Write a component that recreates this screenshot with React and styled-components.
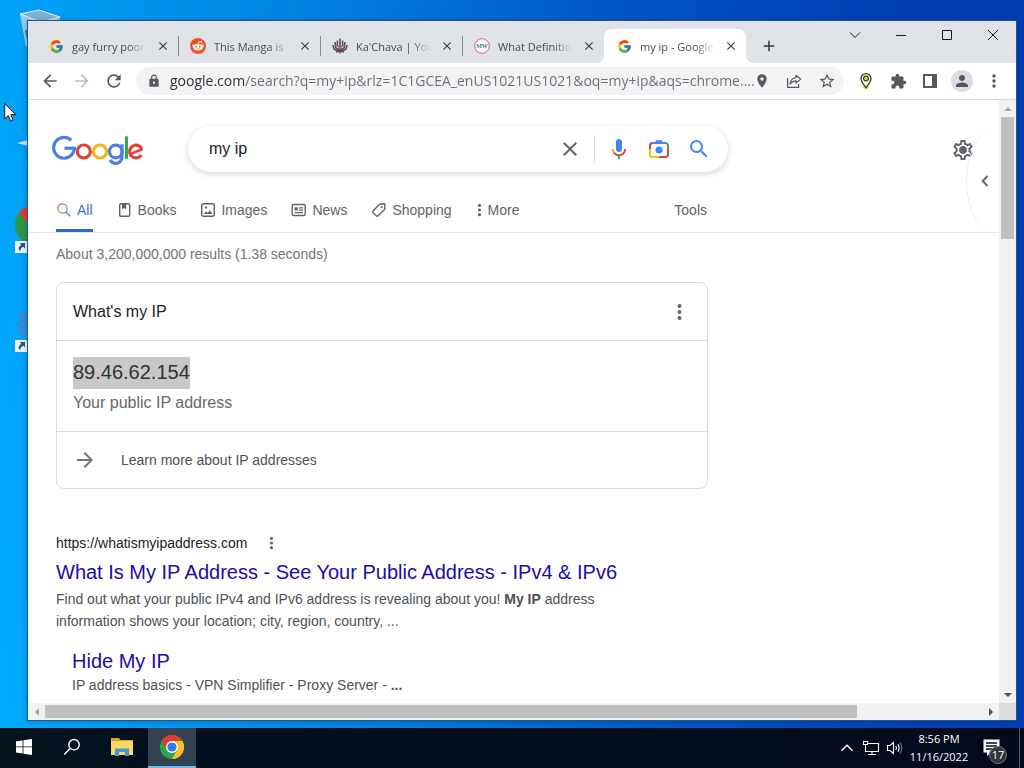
import React from "react";
import styled, { createGlobalStyle, css } from "styled-components";
import {
  MdArrowBack, MdArrowForward, MdRefresh, MdLock, MdLocationOn, MdStarBorder,
  MdExtension, MdPerson, MdMoreVert, MdClose, MdAdd, MdSearch, MdOutlineSettings,
} from "react-icons/md";
import { FcGoogle } from "react-icons/fc";

const ui = `"Open Sans", "Noto Sans", sans-serif`;
const web = `"Liberation Sans", Arial, sans-serif`;

const Global = createGlobalStyle`
  *, *::before, *::after { box-sizing: border-box; }
  body { margin: 0; font-family: ${web}; color: #202124; }
  svg { display: block; flex: none; }
  button { border: 0; padding: 0; background: none; color: inherit; font: inherit; }
  a { color: inherit; text-decoration: none; }
  p, h1, h2, h3, h4 { margin: 0; font-weight: 400; }
`;

/* ---------- desktop ---------- */
const Screen = styled.div`
  position: relative;
  height: 100vh;
  display: flex;
  flex-direction: column;
  overflow: hidden;
  background: linear-gradient(82deg, #00adff 0%, #00a0f6 12%, #0082e2 36%, #0258ca 62%, #0040b6 85%, #003eb4 100%);
`;
const Workspace = styled.main`
  flex: 1;
  min-height: 0;
  display: flex;
  padding: 20px 7px 7px 27px;
`;
const DesktopItem = styled.div`
  position: absolute;
  left: ${(p) => p.$x}px;
  top: ${(p) => p.$y}px;
`;
const Pointer = styled(DesktopItem)`
  z-index: 5;
`;

/* ---------- browser window ---------- */
const BrowserWindow = styled.section`
  position: relative;
  flex: 1;
  min-width: 0;
  display: flex;
  flex-direction: column;
  background: #fff;
  border: 1px solid #24567f;
  box-shadow: 0 1px 6px rgba(0, 20, 80, 0.3);
`;
const TitleBar = styled.header`
  display: flex;
  height: 42px;
  padding-left: 8px;
  background: #dfe2e6;
  font-family: ${ui};
`;
const Tabs = styled.div`
  display: flex;
  align-items: flex-end;
`;
const Tab = styled.div`
  position: relative;
  display: flex;
  align-items: center;
  width: 142px;
  height: 34px;
  padding: 0 7px 0 12px;
  gap: 8px;
  font-size: 11px;
  color: #484c50;
  ${(p) =>
    p.$active
      ? css`
          background: #fff;
          border-radius: 8px 8px 0 0;
          &::before, &::after {
            content: "";
            position: absolute;
            bottom: 0;
            width: 8px;
            height: 8px;
          }
          &::before { left: -8px; background: radial-gradient(circle at 0 0, transparent 8px, #fff 8px); }
          &::after { right: -8px; background: radial-gradient(circle at 100% 0, transparent 8px, #fff 8px); }
        `
      : p.$divider &&
        css`
          &::after {
            content: "";
            position: absolute;
            right: -1px;
            width: 1px;
            height: 20px;
            background: #85898d;
          }
        `}
`;
const TabIcon = styled.span`
  display: grid;
  place-items: center;
  flex: none;
  width: 16px;
  height: 16px;
`;
const TabTitle = styled.span`
  flex: 1;
  min-width: 0;
  white-space: nowrap;
  mask-image: linear-gradient(90deg, #000 74%, transparent 100%);
`;
const TabClose = styled.button`
  display: grid;
  place-items: center;
  width: 16px;
  height: 16px;
  color: #3c4043;
`;
const NewTab = styled.button`
  display: grid;
  place-items: center;
  width: 28px;
  height: 34px;
  margin: 0 auto 0 9px;
  align-self: flex-end;
  color: #303438;
`;
const WindowButton = styled.button`
  display: grid;
  place-items: center;
  width: 46px;
  height: 28px;
`;
const Toolbar = styled.div`
  display: flex;
  align-items: center;
  gap: 4px;
  height: 37px;
  padding: 0 8px;
  border-bottom: 1px solid #d9dbde;
  font-family: ${ui};
`;
const ToolButton = styled.button`
  display: grid;
  place-items: center;
  flex: none;
  width: 28px;
  height: 28px;
  color: ${(p) => (p.$muted ? "#bcbfc2" : "#55585c")};
`;
const Omnibox = styled.div`
  flex: 1;
  min-width: 0;
  display: flex;
  align-items: center;
  height: 28px;
  margin: 0 4px;
  padding: 0 4px 0 11px;
  border-radius: 14px;
  background: #f1f3f4;
  color: #55585c;
`;
const UrlInput = styled.input`
  flex: 1;
  min-width: 0;
  height: 24px;
  margin-left: 9px;
  padding: 0;
  border: 0;
  outline: 0;
  font: 14px/24px ${ui};
  background: linear-gradient(90deg, #2b2e32 76px, #6a6e73 76px);
  background-clip: text;
  color: transparent;
`;
const OmniboxActions = styled.div`
  display: flex;
  align-items: center;
  gap: 16px;
  padding-right: 6px;
`;
const OmniboxButton = styled.button`
  display: grid;
  place-items: center;
  width: 16px;
  height: 28px;
`;
const Avatar = styled.span`
  display: grid;
  place-items: center;
  width: 22px;
  height: 22px;
  border-radius: 50%;
  background: #dadde6;
`;

/* ---------- scrolling page area ---------- */
const PageGrid = styled.div`
  flex: 1;
  min-height: 0;
  display: grid;
  grid-template: minmax(0, 1fr) 17px / minmax(0, 1fr) 17px;
`;
const Viewport = styled.div`
  position: relative;
  overflow: hidden;
`;
const ScrollBar = styled.div`
  display: flex;
  flex-direction: ${(p) => (p.$vertical ? "column" : "row")};
  background: #f1f1f1;
`;
const ScrollArrow = styled.button`
  display: grid;
  place-items: center;
  flex: none;
  width: 17px;
  height: 17px;
  color: ${(p) => (p.$dim ? "#a3a3a3" : "#505050")};
`;
const ScrollTrack = styled.div`
  flex: 1;
  padding: ${(p) => (p.$vertical ? "0 2px" : "2px 0")};
`;
const ScrollThumb = styled.div`
  width: ${(p) => (p.$vertical ? "100%" : "86.7%")};
  height: ${(p) => (p.$vertical ? "21.5%" : "100%")};
  background: #c0c0c0;
`;
const ScrollCorner = styled.div`
  background: #dcdcdc;
`;

/* ---------- search page ---------- */
const SearchHeader = styled.div`
  display: flex;
  align-items: center;
  padding: 26px 16px 16px 24px;
`;
const LogoLink = styled.a`
  margin-right: 44px;
`;
const SearchForm = styled.form`
  display: flex;
  align-items: center;
  flex: 0 1 540px;
  height: 46px;
  padding: 0 9px 0 21px;
  border-radius: 23px;
  background: #fff;
  box-shadow: 0 2px 5px 1px rgba(64, 60, 67, 0.16);
`;
const SearchInput = styled.input`
  flex: 1;
  min-width: 0;
  padding: 0;
  border: 0;
  outline: 0;
  background: none;
  font: 16px/24px ${web};
  color: #202124;
`;
const FormButton = styled.button`
  display: grid;
  place-items: center;
  flex: none;
  width: 40px;
  height: 40px;
  color: ${(p) => p.$color || "#63676b"};
`;
const FormDivider = styled.span`
  width: 1px;
  height: 28px;
  margin: 0 4px;
  background: #dadce0;
`;
const SettingsButton = styled(FormButton)`
  margin-left: auto;
`;
const NavBar = styled.nav`
  height: 45px;
  padding-left: 28px;
  border-bottom: 1px solid #e4e6e8;
`;
const NavList = styled.div`
  display: flex;
  gap: 24px;
  max-width: 651px;
`;
const NavItem = styled.a`
  display: flex;
  align-items: center;
  gap: 5px;
  height: 44px;
  padding-top: 3px;
  border-bottom: 3px solid ${(p) => (p.$active ? "#2b6cc0" : "transparent")};
  font-size: 14px;
  color: ${(p) => (p.$active ? "#3c70cc" : "#5f6368")};
`;
const ToolsButton = styled.button`
  margin-left: auto;
  font-size: 14px;
  color: #5f6368;
`;
const Results = styled.div`
  max-width: 680px;
  padding-left: 28px;
`;
const Stats = styled.p`
  padding: 11px 0 18px;
  font-size: 14px;
  line-height: 20px;
  color: #70757a;
`;
const Card = styled.section`
  border: 1px solid #dadce0;
  border-radius: 8px;
`;
const CardRow = styled.div`
  display: flex;
  align-items: center;
  gap: 24px;
  height: ${(p) => p.$height}px;
  padding: 0 16px;
`;
const CardTitle = styled.h2`
  margin-right: auto;
  font-size: 16px;
`;
const CardBody = styled.div`
  padding: 16px 16px 14px;
  border: solid #dadce0;
  border-width: 1px 0;
`;
const Selected = styled.mark`
  display: inline-block;
  vertical-align: top;
  padding-bottom: 2px;
  font-size: 20px;
  line-height: 30px;
  background: #c8c8c8;
  color: #303235;
`;
const Caption = styled.p`
  font-size: 16px;
  line-height: 28px;
  color: #65696e;
`;
const LearnMore = styled.a`
  font-size: 14px;
  color: #4d5156;
`;
const IconButton = styled.button`
  display: grid;
  place-items: center;
  width: 24px;
  height: 20px;
  color: #63676b;
`;
const Result = styled.article`
  margin-top: 44px;
`;
const ResultUrl = styled.div`
  display: flex;
  align-items: center;
  gap: 12px;
  margin-bottom: 6px;
  font-size: 14px;
  line-height: 20px;
`;
const ResultTitle = styled.h3`
  font-size: 20px;
  line-height: 26px;
  color: #1a0dab;
`;
const Snippet = styled.p`
  max-width: 600px;
  padding-top: ${(p) => (p.$flush ? 0 : 3)}px;
  font-size: 14px;
  line-height: 22px;
  color: #4d5156;
`;
const SubResult = styled.div`
  padding: 16px 0 0 16px;
`;
const SideFlap = styled.button`
  position: absolute;
  top: 27px;
  right: 0;
  display: grid;
  place-items: center;
  width: 33px;
  height: 108px;
  padding-left: 4px;
  border-left: 1px solid #eceded;
  border-radius: 100% 0 0 100% / 50% 0 0 50%;
  color: #63676b;
`;

/* ---------- taskbar ---------- */
const Taskbar = styled.footer`
  display: flex;
  height: 40px;
  background: linear-gradient(90deg, #02131e, #030d1c 60%, #030a1c);
  color: #fff;
  font-family: ${ui};
`;
const TaskGroup = styled.div`
  display: flex;
  gap: ${(p) => p.$gap || 0}px;
  margin-right: ${(p) => (p.$end ? "auto" : "2px")};
`;
const TaskButton = styled.button`
  display: grid;
  place-items: center;
  width: 48px;
  border-bottom: 2px solid ${(p) => (p.$active ? "#76b9ed" : "transparent")};
  background: ${(p) => (p.$active ? "#334450" : "none")};
`;
const TrayButton = styled.button`
  display: grid;
  place-items: center;
  width: 24px;
`;
const Clock = styled.button`
  width: 64px;
  font-size: 11px;
  line-height: 18px;
  text-align: center;
  white-space: nowrap;
`;
const Notifications = styled.button`
  position: relative;
  display: flex;
  align-items: center;
  width: 48px;
  padding-left: 12px;
`;
const Badge = styled.span`
  position: absolute;
  left: 18px;
  top: 18px;
  width: 18px;
  height: 18px;
  border: 1px solid #777;
  border-radius: 50%;
  background: #32363b;
  font-size: 11px;
  line-height: 16px;
  text-align: center;
`;
const ShowDesktop = styled.button`
  width: 5px;
  border-left: 1px solid #4b5564;
`;

/* ---------- drawings ---------- */
const Triangle = ({ turn }) => (
  <svg width="8" height="8" viewBox="0 0 8 8"><path d="M0 6L4 2l4 4z" fill="currentColor" transform={`rotate(${turn} 4 4)`} /></svg>
);

const GoogleLogo = () => (
  <svg width="92" height="32" viewBox="0 0 92 32" role="img" aria-label="Google" fill="none" strokeWidth="3.1">
    <circle cx="12" cy="14.8" r="10.4" stroke="#4a7fe6" pathLength="360" strokeDasharray="314 360" />
    <line x1="12.5" y1="15.2" x2="23.9" y2="15.2" stroke="#4a7fe6" />
    <circle cx="31.8" cy="18.5" r="6.5" stroke="#dc4335" />
    <circle cx="48" cy="18.5" r="6.5" stroke="#f6b512" />
    <circle cx="63.8" cy="18.5" r="6.4" stroke="#4a7fe6" />
    <line x1="70" y1="11.3" x2="70" y2="24.8" stroke="#4a7fe6" />
    <circle cx="63.8" cy="24.3" r="6.2" stroke="#4a7fe6" pathLength="360" strokeDasharray="155 360" />
    <line x1="74.5" y1="3.3" x2="74.5" y2="25.9" stroke="#34a853" />
    <circle cx="84" cy="18.5" r="6.4" stroke="#dc4335" pathLength="360" strokeDasharray="302 360" transform="rotate(34 84 18.5)" />
    <line x1="78.2" y1="21.1" x2="90.6" y2="16" stroke="#dc4335" strokeWidth="2.6" />
  </svg>
);

const RedditIcon = () => (
  <svg width="16" height="16" viewBox="0 0 16 16">
    <circle cx="8" cy="8" r="8" fill="#f4501e" />
    <path d="M8 6.2l.6-2.6 2.2.5" fill="none" stroke="#fff" strokeWidth=".8" />
    <circle cx="11.2" cy="4.1" r="1" fill="#fff" />
    <circle cx="3.6" cy="7.9" r="1.3" fill="#fff" /><circle cx="12.4" cy="7.9" r="1.3" fill="#fff" />
    <ellipse cx="8" cy="9.3" rx="4.6" ry="3.3" fill="#fff" />
    <circle cx="6.2" cy="8.7" r=".9" fill="#f4501e" /><circle cx="9.8" cy="8.7" r=".9" fill="#f4501e" />
    <path d="M6.2 10.8q1.8 1.1 3.6 0" fill="none" stroke="#f4501e" strokeWidth=".6" />
  </svg>
);

const KachavaIcon = () => (
  <svg width="16" height="16" viewBox="0 0 16 16" fill="none" stroke="#5a4a50" strokeWidth="1.5">
    <path d="M8 .5v15M5.4 2.5v6M10.6 2.5v6M3 4l.8 5.8L8 12.5l4.2-2.7L13 4M.8 7l1.4 4.200L8 14l5.800-2.800L15.200 7M4 14l4-1 4 1" />
    <path d="M6 8.500h4M5.500 10.500h5" stroke="#94696f" />
  </svg>
);

const DictionaryIcon = () => (
  <svg width="16" height="16" viewBox="0 0 16 16">
    <circle cx="8" cy="8" r="7.3" fill="#fff" stroke="#d9617d" />
    <text x="8" y="10" textAnchor="middle" fontFamily="Liberation Serif, serif" fontWeight="700" fontSize="6" fill="#35748f">MW</text>
  </svg>
);

const ShareIcon = () => (
  <svg width="16" height="16" viewBox="0 0 16 16" fill="none" stroke="currentColor" strokeWidth="1.2">
    <path d="M1.6 5v9.4h11V11" />
    <path d="M10 2.2l4.8 3.9L10 10V7.8C7.2 7.8 5.4 8.8 4 11c.4-3.6 2.4-6 6-6.5z" strokeLinejoin="round" />
  </svg>
);

const PinExtension = () => (
  <svg width="18" height="18" viewBox="0 0 18 18">
    <ellipse cx="9" cy="15.4" rx="3.2" ry="2" fill="#f5f53a" />
    <path d="M9 15.8C7 12.7 4 10 4 6.600a5 5 0 0110 0C14 10 11 12.700 9 15.800z" fill="#fbfae0" stroke="#35352a" strokeWidth="1.3" />
    <circle cx="9" cy="6.6" r="2.4" fill="#e9e43a" stroke="#35352a" strokeWidth="1.2" />
  </svg>
);

const SidePanelIcon = () => (
  <svg width="14" height="14" viewBox="0 0 14 14"><path d="M1 1h12v12H1z" fill="none" stroke="currentColor" strokeWidth="2" /><path d="M9 1h4v12H9z" fill="currentColor" /></svg>
);

const MicIcon = () => (
  <svg width="24" height="24" viewBox="0 0 24 24">
    <rect x="9" y="2" width="6" height="13" rx="3" fill="#4285f4" />
    <path d="M5.9 12a6.1 6.1 0 001.7 4.3" fill="none" stroke="#f2a60c" strokeWidth="1.9" />
    <path d="M7.2 15.8a6.1 6.1 0 0010.9-3.8" fill="none" stroke="#e0412f" strokeWidth="1.9" />
    <path d="M12 18v4" stroke="#34a853" strokeWidth="2" />
  </svg>
);

const LensIcon = () => (
  <svg width="24" height="24" viewBox="0 0 24 24" fill="none" strokeWidth="2">
    <path d="M3 12V8.6A2.7 2.7 0 015.7 6" stroke="#e0412f" />
    <path d="M5.2 6h13" stroke="#4285f4" />
    <path d="M9.2 3.2h5.6L16.800 7H7.200z" fill="#4285f4" />
    <path d="M18 6h.3A2.7 2.7 0 0121 8.7V12" stroke="#34a853" />
    <path d="M21 11.6v5.7a2.7 2.7 0 01-2.7 2.7H12" stroke="#e0412f" />
    <path d="M3 12v5.3a2.7 2.7 0 002.7 2.7H12" stroke="#fbbc04" />
    <circle cx="12" cy="13" r="3.5" fill="#4285f4" />
  </svg>
);

const GearIcon = () => (
  <svg width="24" height="24" viewBox="0 0 24 24">
    <MdOutlineSettings size={24} y="1" />
    <circle cx="12" cy="13" r="3.4" fill="currentColor" />
  </svg>
);

const AllIcon = () => (
  <svg width="16" height="16" viewBox="0 0 16 16" fill="none" strokeWidth="1.3">
    <circle cx="6.5" cy="6.5" r="4.6" stroke="#7b8fae" />
    <path d="M1.9 6.5a4.6 4.6 0 014.6-4.6" stroke="#e0905c" /><path d="M1.9 6.5a4.6 4.6 0 002.6 4.1" stroke="#e5b756" />
    <path d="M9.9 9.9l4.3 4.3" stroke="#4b80d4" />
  </svg>
);
const BooksIcon = () => (
  <svg width="16" height="16" viewBox="0 0 16 16"><rect x="2.7" y="1.7" width="10" height="12.6" rx="1.2" fill="none" stroke="currentColor" strokeWidth="1.4" /><path d="M5 2h4.2v5.6L7.1 6 5 7.6z" fill="currentColor" /></svg>
);
const ImagesIcon = () => (
  <svg width="16" height="16" viewBox="0 0 16 16"><rect x="1.7" y="1.7" width="12.6" height="12.6" rx="2" fill="none" stroke="currentColor" strokeWidth="1.4" /><path d="M3.8 12l2.3-2.8 1.6 1.7 2.2-2.7L12.6 12zM5 4.8h2v1.7H5z" fill="currentColor" /></svg>
);
const NewsIcon = () => (
  <svg width="16" height="16" viewBox="0 0 16 16"><rect x="1.2" y="2.5" width="13" height="11" rx="1.6" fill="none" stroke="currentColor" strokeWidth="1.4" /><path d="M3.6 5.2h3.2v3.4H3.6zM8 5.2h4v1.2H8zM8 7.5h4v1.2H8zM3.6 10H12v1.300H3.600z" fill="currentColor" /></svg>
);
const TagIcon = () => (
  <svg width="16" height="16" viewBox="0 0 16 16"><path d="M8.6 2.2l4.4-.4q1 0 1 1l-.4 4.6-6.6 6.4q-.8.7-1.6 0L2 10.6q-.8-.8 0-1.6z" fill="none" stroke="currentColor" strokeWidth="1.4" strokeLinejoin="round" /><circle cx="10.6" cy="5.2" r="1.1" fill="currentColor" /></svg>
);
const Dots = ({ size = 18 }) => (
  <svg width={size / 2} height={size} viewBox="0 0 9 18" fill="currentColor"><circle cx="4.5" cy="3" r="2" /><circle cx="4.5" cy="9" r="2" /><circle cx="4.5" cy="15" r="2" /></svg>
);

const ChromeLogo = ({ size = 24 }) => (
  <svg width={size} height={size} viewBox="0 0 24 24">
    <circle cx="12" cy="12" r="12" fill="#2fa24d" />
    <path d="M1.6 6A12 12 0 0122.4 6H12l-5.2 9z" fill="#e33b2e" />
    <path d="M22.4 6A12 12 0 0112 24l5.2-9L12 6z" fill="#fcc31e" />
    <circle cx="12" cy="12" r="6" fill="#fff" /><circle cx="12" cy="12" r="4.6" fill="#2f7de8" />
  </svg>
);
const WindowsLogo = () => (
  <svg width="16" height="16" viewBox="0 0 16 16" fill="#fff"><path d="M0 2.3l6.6-.9v6.1H0zM7.4 1.3L16 0v7.5H7.4zM0 8.3h6.6v6.2L0 13.6zM7.4 8.3H16V16l-8.6-1.3z" /></svg>
);
const TaskSearch = () => (
  <svg width="18" height="18" viewBox="0 0 18 18" fill="none" stroke="#fff" strokeWidth="1.4"><circle cx="11" cy="6.7" r="5.2" /><path d="M7.2 10.6L1.2 16.6" /></svg>
);
const FolderIcon = () => (
  <svg width="22" height="20" viewBox="0 0 22 20">
    <path d="M0 1h8l1.5 2H22v15H0z" fill="#dfa22d" /><path d="M0 4h22v14H0z" fill="#fbd566" />
    <path d="M4 19v-7.5h14V19h-4v-4H8v4z" fill="#3c9bd2" />
  </svg>
);
const NetworkIcon = () => (
  <svg width="18" height="16" viewBox="0 0 18 16" fill="none" stroke="#fff" strokeWidth="1.1"><path d="M6 3.5h10.500v8H3.500V7M10 11.500v3M6 14.500h8M1.500 1.500h4v3h-4zM3.500 4.500v3" /></svg>
);
const SpeakerIcon = () => (
  <svg width="18" height="16" viewBox="0 0 18 16" fill="none" stroke="#fff" strokeWidth="1.1"><path d="M1.500 5.500h2.500L7.500 2.500v11L4 10.500H1.500zM9.800 6q1.300 2 0 4M11.900 4.300q2.500 3.700 0 7.400" /><path d="M14 2.600q3.600 5.400 0 10.800" stroke="#6f7680" /></svg>
);
const MessageIcon = () => (
  <svg width="17" height="18" viewBox="0 0 17 18"><path d="M.5.5h16v13h-9L4 17v-3.500H.5z" fill="#fff" /><path d="M3 4h11M3 7h11M3 10h7" stroke="#09111f" strokeWidth="1.3" /></svg>
);
const ShortcutArrow = () => (
  <svg width="12" height="12" viewBox="0 0 12 12"><path d="M0 0h12v12H0z" fill="#f2f6fa" /><path d="M4.500 2H10v5.500L8.300 5.800Q5 7.500 5.200 10.500 1.500 7 6.200 3.700z" fill="#24568f" /></svg>
);

const tabs = [
  { title: "gay furry poor", icon: <FcGoogle size={15} /> },
  { title: "This Manga is", icon: <RedditIcon /> },
  { title: "Ka'Chava | You", icon: <KachavaIcon /> },
  { title: "What Definitio", icon: <DictionaryIcon /> },
  { title: "my ip - Google", icon: <FcGoogle size={15} />, active: true },
];

const sections = [
  { label: "All", icon: <AllIcon />, active: true },
  { label: "Books", icon: <BooksIcon /> },
  { label: "Images", icon: <ImagesIcon /> },
  { label: "News", icon: <NewsIcon /> },
  { label: "Shopping", icon: <TagIcon /> },
  { label: "More", icon: <Dots size={14} /> },
];

const windowControls = [
  ["Search tabs", "M1 3.5l5 5 5-5"],
  ["Minimize", "M1 6.5h10"],
  ["Maximize", "M1.5 1.5h9v9h-9z"],
  ["Close", "M1 1l10 10M11 1L1 11"],
];

export default function App() {
  return (
    <Screen>
      <Global />
      <DesktopItem $x={19} $y={9}>
        <svg width="42" height="40" viewBox="0 0 42 40">
          <path d="M1 5L20 1l21 7-4 30H7z" fill="#b8d9ea" opacity=".8" />
          <path d="M1 5L20 1l21 7-19 5z" fill="#7bb4d4" stroke="#d9edf5" />
          <path d="M6 22l4-3v12H8z" fill="#2d79a5" />
        </svg>
      </DesktopItem>
      <DesktopItem $x={16} $y={138}>
        <svg width="16" height="10" viewBox="0 0 16 10"><path d="M1 5l15-4v8z" fill="#cfe3f6" /></svg>
      </DesktopItem>
      <DesktopItem $x={15} $y={205}>
        <svg width="40" height="40" viewBox="0 0 40 40"><circle cx="20" cy="20" r="20" fill="#2b9a48" /><path d="M4 8A20 20 0 0136 8L18 26z" fill="#e33b2e" /></svg>
      </DesktopItem>
      <DesktopItem $x={15} $y={241}><ShortcutArrow /></DesktopItem>
      <DesktopItem $x={16} $y={312}>
        <svg width="14" height="26" viewBox="0 0 14 26" fill="none" stroke="#6b74b4" strokeWidth="1.4"><path d="M1 2h11M2 2l9 9-9 8 10 5M12 3L2 12l10 8" /></svg>
      </DesktopItem>
      <DesktopItem $x={15} $y={340}><ShortcutArrow /></DesktopItem>

      <Workspace>
        <BrowserWindow>
          <TitleBar>
            <Tabs>
              {tabs.map((t, i) => (
                <Tab key={t.title} $active={t.active} $divider={i < 3}>
                  <TabIcon>{t.icon}</TabIcon>
                  <TabTitle>{t.title}</TabTitle>
                  <TabClose aria-label="Close tab"><MdClose size={14} /></TabClose>
                </Tab>
              ))}
            </Tabs>
            <NewTab aria-label="New tab"><MdAdd size={18} /></NewTab>
            {windowControls.map(([label, d]) => (
              <WindowButton key={label} aria-label={label}>
                <svg width="12" height="12" viewBox="0 0 12 12" fill="none" stroke="#15181c"><path d={d} /></svg>
              </WindowButton>
            ))}
          </TitleBar>

          <Toolbar>
            <ToolButton aria-label="Back"><MdArrowBack size={20} /></ToolButton>
            <ToolButton aria-label="Forward" $muted><MdArrowForward size={20} /></ToolButton>
            <ToolButton aria-label="Reload"><MdRefresh size={20} /></ToolButton>
            <Omnibox>
              <MdLock size={14} />
              <UrlInput
                aria-label="Address"
                defaultValue="google.com/search?q=my+ip&rlz=1C1GCEA_enUS1021US1021&oq=my+ip&aqs=chrome...."
              />
              <OmniboxActions>
                <OmniboxButton aria-label="Location"><MdLocationOn size={16} /></OmniboxButton>
                <OmniboxButton aria-label="Share"><ShareIcon /></OmniboxButton>
                <OmniboxButton aria-label="Bookmark"><MdStarBorder size={18} /></OmniboxButton>
              </OmniboxActions>
            </Omnibox>
            <ToolButton aria-label="Location extension"><PinExtension /></ToolButton>
            <ToolButton aria-label="Extensions"><MdExtension size={17} /></ToolButton>
            <ToolButton aria-label="Side panel"><SidePanelIcon /></ToolButton>
            <ToolButton aria-label="Profile"><Avatar><MdPerson size={18} /></Avatar></ToolButton>
            <ToolButton aria-label="Menu"><MdMoreVert size={20} /></ToolButton>
          </Toolbar>

          <PageGrid>
            <Viewport>
              <SearchHeader>
                <LogoLink href="#home"><GoogleLogo /></LogoLink>
                <SearchForm onSubmit={(e) => e.preventDefault()}>
                  <SearchInput aria-label="Search" defaultValue="my ip" />
                  <FormButton type="button" aria-label="Clear"><MdClose size={24} /></FormButton>
                  <FormDivider />
                  <FormButton type="button" aria-label="Search by voice"><MicIcon /></FormButton>
                  <FormButton type="button" aria-label="Search by image"><LensIcon /></FormButton>
                  <FormButton aria-label="Search" $color="#4285f4"><MdSearch size={24} /></FormButton>
                </SearchForm>
                <SettingsButton aria-label="Settings"><GearIcon /></SettingsButton>
              </SearchHeader>

              <NavBar>
                <NavList>
                  {sections.map((s) => (
                    <NavItem key={s.label} href="#section" $active={s.active}>
                      {s.icon}
                      {s.label}
                    </NavItem>
                  ))}
                  <ToolsButton>Tools</ToolsButton>
                </NavList>
              </NavBar>

              <Results>
                <Stats>About 3,200,000,000 results (1.38 seconds)</Stats>
                <Card>
                  <CardRow $height={57}>
                    <CardTitle>What's my IP</CardTitle>
                    <IconButton aria-label="About this result"><Dots /></IconButton>
                  </CardRow>
                  <CardBody>
                    <Selected>89.46.62.154</Selected>
                    <Caption>Your public IP address</Caption>
                  </CardBody>
                  <CardRow $height={56}>
                    <MdArrowForward size={24} color="#70757a" />
                    <LearnMore href="#learn">Learn more about IP addresses</LearnMore>
                  </CardRow>
                </Card>

                <Result>
                  <ResultUrl>
                    https://whatismyipaddress.com
                    <IconButton aria-label="About this result"><Dots size={14} /></IconButton>
                  </ResultUrl>
                  <ResultTitle>
                    <a href="#result">What Is My IP Address - See Your Public Address - IPv4 &amp; IPv6</a>
                  </ResultTitle>
                  <Snippet>
                    Find out what your public IPv4 and IPv6 address is revealing about you! <b>My IP</b> address
                    information shows your location; city, region, country, ...
                  </Snippet>
                  <SubResult>
                    <ResultTitle as="h4"><a href="#hide">Hide My IP</a></ResultTitle>
                    <Snippet $flush>IP address basics - VPN Simplifier - Proxy Server - <b>...</b></Snippet>
                  </SubResult>
                </Result>
              </Results>

              <SideFlap aria-label="Open side panel">
                <svg width="8" height="14" viewBox="0 0 8 14" fill="none" stroke="currentColor" strokeWidth="2"><path d="M6.5 2L1.8 7l4.700 5" /></svg>
              </SideFlap>
            </Viewport>

            <ScrollBar $vertical>
              <ScrollArrow aria-label="Scroll up" $dim><Triangle turn={0} /></ScrollArrow>
              <ScrollTrack $vertical><ScrollThumb $vertical /></ScrollTrack>
              <ScrollArrow aria-label="Scroll down"><Triangle turn={180} /></ScrollArrow>
            </ScrollBar>
            <ScrollBar>
              <ScrollArrow aria-label="Scroll left" $dim><Triangle turn={270} /></ScrollArrow>
              <ScrollTrack><ScrollThumb /></ScrollTrack>
              <ScrollArrow aria-label="Scroll right"><Triangle turn={90} /></ScrollArrow>
            </ScrollBar>
            <ScrollCorner />
          </PageGrid>
        </BrowserWindow>
      </Workspace>

      <Taskbar>
        <TaskGroup>
          <TaskButton aria-label="Start"><WindowsLogo /></TaskButton>
          <TaskButton aria-label="Search"><TaskSearch /></TaskButton>
        </TaskGroup>
        <TaskGroup $gap={2} $end>
          <TaskButton aria-label="File Explorer"><FolderIcon /></TaskButton>
          <TaskButton aria-label="Chrome" $active><ChromeLogo /></TaskButton>
        </TaskGroup>
        <TrayButton aria-label="Show hidden icons">
          <svg width="14" height="8" viewBox="0 0 14 8" fill="none" stroke="#fff" strokeWidth="1.4"><path d="M1.5 6.8L7 1.3l5.500 5.500" /></svg>
        </TrayButton>
        <TrayButton aria-label="Network"><NetworkIcon /></TrayButton>
        <TrayButton aria-label="Volume"><SpeakerIcon /></TrayButton>
        <Clock>8:56 PM<br />11/16/2022</Clock>
        <Notifications aria-label="Notifications"><MessageIcon /><Badge>17</Badge></Notifications>
        <ShowDesktop aria-label="Show desktop" />
      </Taskbar>

      <Pointer $x={4} $y={102}>
        <svg width="13" height="21" viewBox="0 0 13 21"><path d="M.7 1.5v15.3l3.600-3.300 2.400 5.700 2.500-1-2.400-5.600h5z" fill="#fff" stroke="#111" /></svg>
      </Pointer>
    </Screen>
  );
}
